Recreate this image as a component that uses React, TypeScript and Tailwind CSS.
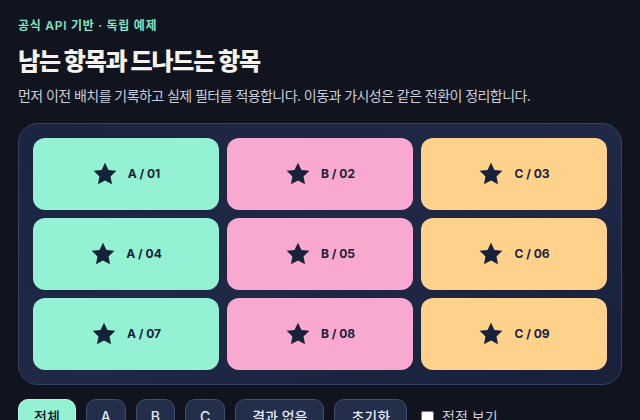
import { useState } from "react";

type Tile = { id: string; group: "A" | "B" | "C" };

const tiles: Tile[] = Array.from({ length: 9 }, (_, i) => {
  const group = (["A", "B", "C"] as const)[i % 3];
  return { id: `${group} / ${String(i + 1).padStart(2, "0")}`, group };
});

const tileColor: Record<Tile["group"], string> = {
  A: "bg-[#94f1d3]",
  B: "bg-[#f9a9cf]",
  C: "bg-[#fed28a]",
};

function Star() {
  return (
    <svg viewBox="0 0 24 24" className="h-[26px] w-[26px] fill-[#16213a]">
      <path d="M12 1.5l3.2 6.7 7.3.9-5.4 5.1 1.4 7.3L12 17.9l-6.5 3.6 1.4-7.3-5.4-5.1 7.3-.9z" />
    </svg>
  );
}

export default function App() {
  const [filter, setFilter] = useState<"all" | "A" | "B" | "C" | "none">("all");
  const [showPoints, setShowPoints] = useState(false);

  const visible = tiles.filter((t) => filter === "all" || t.group === filter);

  const btn = "h-9 rounded-[10px] border text-sm font-medium leading-none";

  return (
    <div
      className="min-h-screen bg-[#11141f] px-[18px] pt-[17px] text-white"
      style={{ fontFamily: '"Inter", "Noto Sans CJK KR", sans-serif' }}
    >
      <p className="text-xs font-semibold leading-[17px] tracking-[0.06em] text-[#7fe4c5]">
        공식 API 기반 · 독립 예제
      </p>
      <h1 className="mt-[12px] text-2xl font-extrabold leading-8 tracking-[-0.05em] text-[#f5f2ea]">
        남는 항목과 드나드는 항목
      </h1>
      <p className="mt-[8px] text-sm leading-5 tracking-[-0.04em] text-[#c9cfdb]">
        먼저 이전 배치를 기록하고 실제 필터를 적용합니다. 이동과 가시성은 같은 전환이 정리합니다.
      </p>

      {/* Grid panel */}
      <div className="mt-[17px] rounded-[20px] border border-[#354260] bg-gradient-to-br from-[#1b2440] via-[#1f2946] to-[#18203a] p-[14px]">
        <div className="grid grid-cols-3 gap-2">
          {visible.map((t) => (
            <div
              key={t.id}
              className={`flex h-[72px] items-center justify-center gap-[10px] rounded-[12px] ${tileColor[t.group]}`}
            >
              <Star />
              <span className="text-xs font-bold text-[#16213a]">{t.id}</span>
            </div>
          ))}
        </div>
      </div>

      {/* Controls */}
      <div className="mt-[14px] flex items-center gap-[10px]">
        <button
          onClick={() => setFilter("all")}
          className={`${btn} border-[#b6f7e2] bg-[#94f1d3] px-[15px] text-[#11141f]`}
        >
          전체
        </button>
        {(["A", "B", "C"] as const).map((g) => (
          <button
            key={g}
            onClick={() => setFilter(g)}
            className={`${btn} border-[#3f4d6e] bg-[#232e4a] px-[14px] text-[#e5e9f2]`}
          >
            {g}
          </button>
        ))}
        <button
          onClick={() => setFilter("none")}
          className={`${btn} border-[#3f4d6e] bg-[#232e4a] px-[16px] text-[#e5e9f2]`}
        >
          결과 없음
        </button>
        <button
          onClick={() => setFilter("all")}
          className={`${btn} border-[#3f4d6e] bg-[#232e4a] px-[16px] text-[#e5e9f2]`}
        >
          초기화
        </button>
        <label className="ml-1 flex items-center gap-2 text-sm text-[#c9cfdb]">
          <input
            type="checkbox"
            checked={showPoints}
            onChange={(e) => setShowPoints(e.target.checked)}
            className="h-[13px] w-[13px]"
          />
          접점 보기
        </label>
      </div>
    </div>
  );
}
